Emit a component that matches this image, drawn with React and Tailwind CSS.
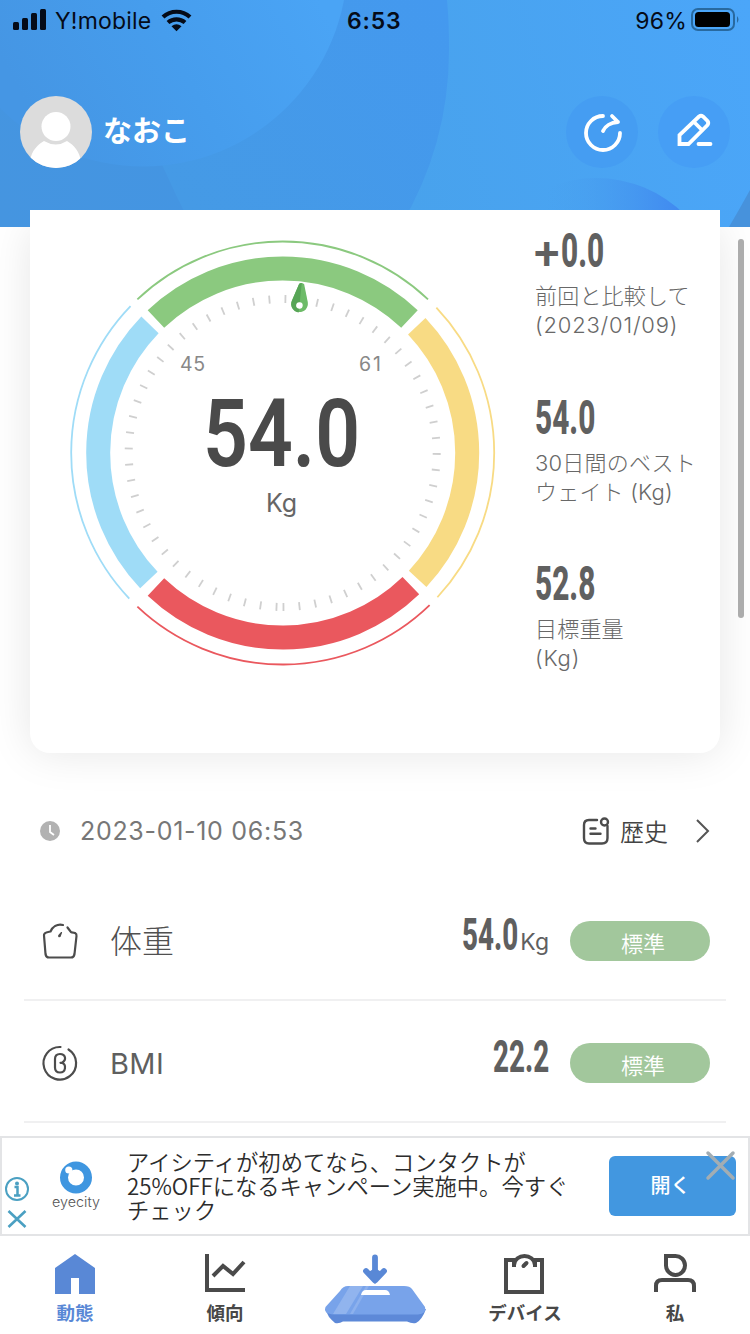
import React from "react";

const CX = 282.7;
const CY = 453;
const point = (r, deg) => {
  const a = (deg * Math.PI) / 180;
  return [CX + r * Math.sin(a), CY - r * Math.cos(a)];
};
const arc = (r, from, to) => {
  const [x1, y1] = point(r, from);
  const [x2, y2] = point(r, to);
  return `M${x1} ${y1}A${r} ${r} 0 0 1 ${x2} ${y2}`;
};

const SEGMENTS = [
  { from: -43.4, to: 43.4, color: "#8bc97f" },
  { from: 46.6, to: 133, color: "#f8db84" },
  { from: 136, to: 223.4, color: "#ea585e" },
  { from: 226.5, to: 314, color: "#9fdcf7" },
];
const TICKS = Array.from({ length: 61 }, (_, i) => -177.7 + i * 5.957).filter(
  (t) => Math.abs(t - 6.9) > 2
);

function Gauge() {
  return (
    <svg className="h-[526px] w-[475px] shrink-0" viewBox="30 227 475 526">
      {SEGMENTS.map((s) => (
        <g key={s.color} fill="none" stroke={s.color}>
          <path d={arc(184.5, s.from, s.to)} strokeWidth="24" />
          <path d={arc(211.5, s.from, s.to)} strokeWidth="1.8" />
        </g>
      ))}
      {TICKS.map((t) => {
        const [x1, y1] = point(150, t);
        const [x2, y2] = point(158, t);
        return <line key={t} x1={x1} y1={y1} x2={x2} y2={y2} stroke="#cfcfcf" strokeWidth="1.8" />;
      })}
      <g transform="rotate(6 300 300)">
        <path d="M297.500 284q2.500-2 5 0l5.500 17.500a8.300 8.300 0 1 1-16 0z" fill="#6dbb68" />
        <path d="M297.500 284q1.500-1.200 2.500-1v29.500a8.300 8.300 0 0 1-8-11z" fill="#57a556" />
        <circle cx="300" cy="305.500" r="3.300" fill="#fff" />
      </g>
      <g fontFamily="Inter, sans-serif">
        <text x="180" y="371" fontSize="19.500" textLength="25" fill="#888">45</text>
        <text x="359" y="371" fontSize="19.500" textLength="22" fill="#888">61</text>
        <text x="266" y="512" fontSize="25" textLength="31" fill="#666">Kg</text>
      </g>
      <text
        transform="translate(203 465.500) scale(.837 1)"
        fontFamily="Roboto, sans-serif"
        fontSize="94"
        fontWeight="650"
        fill="#4a4a4a"
      >
        54.0
      </text>
    </svg>
  );
}

function Stat({ sign, value, lines, className }) {
  return (
    <div className={className}>
      <div className="flex h-12 font-[Roboto] text-[48px] leading-[48px] whitespace-nowrap text-[#606060]">
        {sign && <span className="-ml-px w-[27px] pt-0.5 text-[46px] font-medium">{sign}</span>}
        <span className="origin-left scale-x-[0.62] font-extrabold">{value}</span>
      </div>
      <div className="mt-[7px] text-[22px] leading-[29px] font-light tracking-[0.2px] whitespace-nowrap text-[#686868]">
        {lines}
      </div>
    </div>
  );
}

function StatusBar() {
  return (
    <div className="flex h-10 items-center px-3 text-[23px] text-[#050b18]">
      <svg className="h-6 w-9" viewBox="12 8 36 24" fill="#050b18">
        <rect x="13" y="22" width="6" height="8" rx="1.500" />
        <rect x="22" y="18" width="6" height="12" rx="1.500" />
        <rect x="31" y="13" width="6" height="17" rx="1.500" />
        <rect x="40" y="9" width="6" height="21" rx="1.500" />
      </svg>
      <span className="ml-[7px] w-[98px] pt-0.5 tracking-[0.2px] whitespace-nowrap">Y!mobile</span>
      <svg className="ml-2 h-6 w-8" viewBox="161 8 32 24" fill="none" stroke="#050b18" strokeWidth="4.200">
        <path d="M163 17a20 20 0 0 1 27 0" />
        <path d="M168 22.500a13 13 0 0 1 17 0" />
        <path d="M171.500 26.300q5-4 10 0l-5 5z" fill="#050b18" stroke="none" />
      </svg>
      <span className="ml-[154px] w-[56px] pt-0.5 font-semibold tracking-[0.8px]">6:53</span>
      <span className="ml-auto pt-0.5 tracking-[0.2px]">96%</span>
      <svg className="ml-[3px] -mr-0.5 h-6 w-[50px]" viewBox="690 8 50 24">
        <rect x="692" y="9" width="42" height="21" rx="6" fill="none" stroke="#28699f" strokeWidth="2" />
        <rect x="695" y="12" width="35" height="15" rx="3.500" fill="#000" />
        <path d="M737 16q3 3.500 0 7z" fill="#28699f" />
      </svg>
    </div>
  );
}

function HeaderBackdrop() {
  return (
    <svg className="absolute inset-0 h-full w-full" viewBox="0 0 750 227">
      <defs>
        <linearGradient id="sky" gradientUnits="userSpaceOnUse" x1="0" y1="227" x2="750" y2="0">
          <stop offset="0" stopColor="#4595e0" />
          <stop offset=".25" stopColor="#4495e2" />
          <stop offset=".5" stopColor="#48a2ec" />
          <stop offset="1" stopColor="#4ba6f9" />
        </linearGradient>
        <linearGradient id="mid" gradientUnits="userSpaceOnUse" x1="200" y1="227" x2="440" y2="0">
          <stop offset="0" stopColor="#459ae5" />
          <stop offset="1" stopColor="#4499ef" />
        </linearGradient>
        <linearGradient id="near" gradientUnits="userSpaceOnUse" x1="60" y1="167" x2="330" y2="20">
          <stop offset="0" stopColor="#4596e4" />
          <stop offset=".5" stopColor="#469ded" />
          <stop offset="1" stopColor="#4aa4f5" />
        </linearGradient>
        <linearGradient id="low" x1="0" y1="0" x2="1" y2="0">
          <stop offset=".3" stopColor="#48a0ec" stopOpacity="0" />
          <stop offset=".85" stopColor="#4088f0" />
        </linearGradient>
      </defs>
      <rect width="750" height="227" fill="url(#sky)" />
      <path d="M140 110Q160 165 192 227H400Q449 145 449 50Q449 20 447 0H140Z" fill="url(#mid)" />
      <circle cx="143" cy="-38" r="204.500" fill="url(#near)" />
      <circle cx="596" cy="304" r="126" fill="url(#low)" />
      <path d="M750 190Q739 210 729 227H750Z" fill="#4792dc" />
    </svg>
  );
}

function Header() {
  return (
    <header className="relative z-10 h-[227px] shrink-0 overflow-hidden">
      <HeaderBackdrop />
      <div className="relative flex h-full flex-col">
        <StatusBar />
        <div className="mt-14 flex h-[72px] items-center px-5">
          <svg className="size-[72px]" viewBox="0 0 72 72">
            <defs>
              <clipPath id="face"><circle cx="36" cy="36" r="36" /></clipPath>
            </defs>
            <g clipPath="url(#face)">
              <rect width="72" height="72" fill="#dcdcdc" />
              <path d="M10 66C11 54 19 48 24 45Q36 52 47 45C54 49 60 56 61 66V72H10Z" fill="#fff" />
              <circle cx="36" cy="30.500" r="14.500" fill="#fff" />
            </g>
          </svg>
          <span className="ml-[11px] text-[29px] font-bold text-white">なおこ</span>
          <div className="ml-auto flex gap-5">
            <div className="size-[72px] rounded-full bg-[#459df2]">
              <svg className="size-[72px]" viewBox="0 0 72 72" fill="none" stroke="#fff" strokeWidth="3.800" strokeLinecap="round" strokeLinejoin="round">
                <path d="M37 20A17 17 0 1 0 54 37" />
                <path d="M37 35C39 30 45 26.500 52 26M46 20L52 26" />
              </svg>
            </div>
            <div className="size-[72px] rounded-full bg-[#469ef5]">
              <svg className="size-[72px]" viewBox="0 0 72 72" fill="none" stroke="#fff" strokeWidth="3.800" strokeLinecap="round" strokeLinejoin="round">
                <path d="M21.500 48V39L41 20.500Q43 19 45 20.500L49.500 25Q51 27 49.500 29L30.500 48Z" strokeLinecap="butt" strokeLinejoin="miter" />
                <path d="M36 26L44 34M40.500 48H52.500" />
              </svg>
            </div>
          </div>
        </div>
        <div className="mx-[30px] mt-auto h-[17px] bg-white" />
      </div>
    </header>
  );
}

function WeightIcon() {
  return (
    <svg className="size-10" viewBox="40 921 40 40" fill="none" stroke="#4c4c4c" strokeWidth="2.200" strokeLinecap="round" strokeLinejoin="round">
      <path d="M63 925C57 923.500 52.500 927 50.500 931.500C48 932 43.500 932 44 935.500L45.500 954Q46 957.500 49 957.500H71Q74 957.500 74.500 954L76.500 936C77 932.500 73 932.500 71 932.200L67.500 927.500" />
      <path d="M61.500 932.500L58.800 935.500Q58.300 937 60 936.500Z" fill="#4c4c4c" strokeWidth="1.200" />
    </svg>
  );
}

function BmiIcon() {
  return (
    <svg className="size-10" viewBox="40 1043 40 40" fill="none" stroke="#4c4c4c" strokeWidth="2.200" strokeLinecap="round">
      <path d="M60.500 1047A16.300 16.300 0 1 0 68.500 1049.500" />
      <path d="M62 1062.800C67 1060 65.500 1054 60 1054Q55 1054 55 1059V1067.500Q55 1072.500 60 1072.500C66 1072.500 66.500 1064.500 62 1062.800H60.500" />
    </svg>
  );
}

function MetricRow({ icon, label, value, unit, labelClass }) {
  return (
    <div className="mx-6 flex h-[122px] items-center border-b-2 border-[#f0f0f1] px-4 pt-[3px]">
      {icon}
      <span className={labelClass}>{label}</span>
      <div className="ml-auto flex h-12 items-baseline text-[#5f5f5f]">
        <div className="flex w-[57px] justify-end">
          <span className="origin-right scale-x-[0.63] font-[Roboto] text-[44px] leading-9 font-extrabold">{value}</span>
        </div>
        {unit && <span className="ml-0.5 text-[23px]">{unit}</span>}
      </div>
      <div className="ml-[21px] flex h-10 w-[140px] items-center justify-center rounded-full bg-[#a2c79c] pl-1.5 text-[22px] leading-10 text-white">
        <span className="pt-0.5 font-['Noto_Sans_CJK_JP'] font-[350]">標準</span>
      </div>
    </div>
  );
}

function Banner() {
  return (
    <div className="flex h-[100px] shrink-0 border-2 border-[#e3e4e6] bg-white">
      <svg className="h-full w-[104px] shrink-0" viewBox="2 1138 104 96" fill="none" stroke="#4ba0c2">
        <circle cx="17" cy="1189" r="11" strokeWidth="2" />
        <path d="M14.500 1187H17.500V1195.500M14 1195.500H20.500" strokeWidth="2.500" />
        <circle cx="17" cy="1183.500" r="2" fill="#4ba0c2" stroke="none" />
        <path d="M8.500 1211L25.500 1227M25.500 1211L8.500 1227" strokeWidth="2.600" />
        <circle cx="76" cy="1177.500" r="12" stroke="#3f96e0" strokeWidth="8" />
        <circle cx="68.800" cy="1170" r="3.600" fill="#fff" stroke="none" />
        <path d="M69 1170L73 1174" stroke="#fff" strokeWidth="1.500" />
        <text x="52" y="1207" fontSize="14.500" textLength="48" lengthAdjust="spacingAndGlyphs" fontFamily="Inter, sans-serif" fontWeight="300" fill="#555" stroke="none">eyecity</text>
      </svg>
      <p className="ml-[21px] flex flex-col pt-[11px] font-['Noto_Sans_CJK_JP'] text-[22.300px] leading-6 font-[350] whitespace-nowrap text-[#2c2c2c]">
        <span>アイシティが初めてなら、コンタクトが</span>
        <span>25%OFFになるキャンペーン実施中。今すぐ</span>
        <span>チェック</span>
      </p>
      <div className="relative mt-[18px] mr-3 ml-auto flex h-[60px] w-[127px] items-center justify-center rounded-md bg-[#4297e0] text-xl font-medium text-white">
        <span className="-ml-1">開く</span>
        <svg className="absolute -top-2 -right-0.5 size-9" viewBox="0 0 36 36" stroke="#a3adb3" strokeWidth="3.500" strokeLinecap="round">
          <path d="M6 5L31 30M31 5L6 30" />
        </svg>
      </div>
    </div>
  );
}

function Tab({ label, active, children }) {
  return (
    <div className={active ? "flex w-[150px] flex-col items-center text-[#5988d6]" : "flex w-[150px] flex-col items-center text-[#484848]"}>
      <svg className="mt-3.5 h-[46px] w-[50px]" viewBox="0 0 50 46" fill="none" stroke="#4a4a4a" strokeWidth="4">
        {children}
      </svg>
      <span className="mt-1 text-[18.500px] leading-[26px] font-bold whitespace-nowrap">{label}</span>
    </div>
  );
}

function ScaleButton() {
  return (
    <div className="flex w-[150px] justify-center pt-[9px]">
      <svg className="h-[85px] w-[120px]" viewBox="315 1245 120 85">
        <path d="M325 1309L329 1317Q332 1320.500 335 1323Q339 1324 343 1321.500H407Q412 1324 416 1323Q422 1320 426 1309Z" fill="#5d89d8" />
        <path d="M340 1291Q343 1286 348 1286H404Q410 1286 412 1289L425 1307Q427 1314 418 1314.500H334Q323 1314 325.500 1307Z" fill="#78a3ea" />
        <path d="M350 1286H360L342 1314H333Z" fill="#91b4ee" />
        <path d="M352 1286H363L346 1314H334Z" fill="#91b4ee" />
        <path d="M366 1286H369L353 1314H350Z" fill="#8db1ed" />
        <path d="M361 1295Q362 1290 366 1290H385Q389 1290 390 1295Z" fill="#fff" />
        <path d="M375 1257.500V1280M366 1271L375 1280.500L384 1271" fill="none" stroke="#5988d6" strokeWidth="5.800" strokeLinecap="round" strokeLinejoin="round" />
        <path d="M367 1273L375 1268L383 1273L375 1284Z" fill="#5988d6" />
      </svg>
    </div>
  );
}

export default function App() {
  return (
    <div lang="ja" className="relative flex h-[1334px] w-[750px] flex-col overflow-hidden bg-white font-[Inter,'Noto_Sans_CJK_JP',sans-serif]">
      <Header />
      <section className="mx-[30px] flex h-[526px] shrink-0 rounded-b-[20px] bg-white shadow-[0_0_44px_rgba(0,0,0,0.1)]">
        <Gauge />
        <div className="ml-[30px] flex flex-col">
          <Stat className="h-[167px]" sign="+" value="0.0" lines={<>前回と比較して<br /><span className="tracking-[0.8px]">(2023/01/09)</span></>} />
          <Stat className="h-[166px]" value="54.0" lines={<>30日間のベスト<br />ウェイト (Kg)</>} />
          <Stat value="52.8" lines={<>目標重量<br /><span className="tracking-[0.8px]">(Kg)</span></>} />
        </div>
      </section>
      <div className="absolute top-[239px] right-[6px] z-20 h-[379px] w-1.5 rounded-full bg-[#acacac]" />

      <main className="flex h-[383px] shrink-0 flex-col overflow-hidden">
        <div className="mt-[54px] flex h-[48px] shrink-0 items-center px-10">
          <svg className="size-5" viewBox="0 0 20 20">
            <circle cx="10" cy="10" r="10" fill="#b2b2b2" />
            <path d="M10 4V11L14 14" fill="none" stroke="#fff" strokeWidth="1.800" />
          </svg>
          <span className="ml-5 pt-0.5 text-[25px] tracking-[0.7px] text-[#777]">2023-01-10 06:53</span>
          <svg className="ml-auto size-7" viewBox="582 817 28 28" fill="none" stroke="#4c4c4c" strokeWidth="2.400" strokeLinecap="round">
            <path d="M597 820H589Q584 820 584 825V838Q584 843.500 589 843.500H602Q607.500 843.500 607.500 838V826M590.500 828.500H595.500M590.500 833.800H600.500" />
            <circle cx="604.500" cy="822" r="3.500" />
          </svg>
          <span className="ml-2.5 font-['Noto_Sans_CJK_JP'] text-2xl font-[350] text-[#444]">歴史</span>
          <svg className="-mr-0.5 ml-6 h-[26px] w-5" viewBox="0 0 20 26" fill="none" stroke="#555" strokeWidth="2">
            <path d="M5 2L16 13L5 24" />
          </svg>
        </div>
        <div className="mt-6 shrink-0">
          <MetricRow icon={<WeightIcon />} label="体重" labelClass="ml-[30px] pt-0.5 text-[32px] font-light text-[#505050]" value="54.0" unit="Kg" />
          <MetricRow icon={<BmiIcon />} label="BMI" labelClass="ml-[30px] pt-0.5 text-[29px] tracking-[0.4px] text-[#5f5f5f]" value="22.2" />
        </div>
      </main>

      <Banner />

      <nav className="flex h-[98px] shrink-0">
        <Tab label="動態" active>
          <path d="M5 18L25 4L45 18V44H29V28H21V44H5Z" fill="#5988d6" stroke="none" />
        </Tab>
        <Tab label="傾向">
          <path d="M7 4V40H45M13 26L23 16L33 24L44 12" />
        </Tab>
        <ScaleButton />
        <Tab label="デバイス">
          <path d="M14 17V10H6V42H42V10H35V17M14 15C15 3 34 3 35 15" />
          <path d="M23.500 16L26.500 13" strokeLinecap="round" />
        </Tab>
        <Tab label="私">
          <path d="M16 6H25A9.500 9.500 0 1 1 16 15ZM6 42V36Q6 30 12 30H38Q44 30 44 36V42" />
        </Tab>
      </nav>
    </div>
  );
}
